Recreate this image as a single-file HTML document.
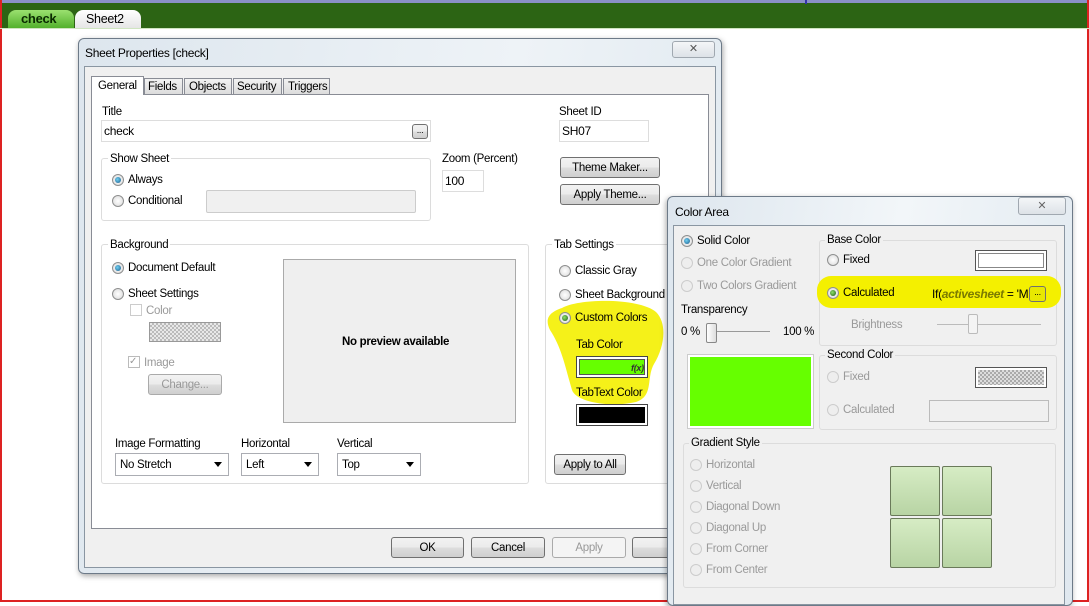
<!DOCTYPE html><html><head><style>
*{margin:0;padding:0;box-sizing:border-box}
body{width:1089px;height:602px;position:relative;overflow:hidden;background:#fff;font-family:"Liberation Sans",sans-serif;font-size:12px;color:#000}
.a{position:absolute}
.t{position:absolute;white-space:nowrap;font-size:11.5px;letter-spacing:-0.3px;margin-top:2px}
.g{color:#9a9a9a}
.grp{position:absolute;border:1px solid #dcdcdc;border-radius:3px}
.in{position:absolute;border:1px solid #abadb3;background:#fff}
.btn{position:absolute;border:1px solid #707070;border-radius:3px;background:linear-gradient(#f2f2f2,#ebebeb 50%,#dddddd 51%,#cfcfcf);text-align:center;font-size:11.5px;letter-spacing:-0.3px}
.r{position:absolute;width:12px;height:12px;border-radius:50%;border:1px solid #8e8f8f;background:radial-gradient(#fff,#d8d8d8)}
.r.on::after{content:"";position:absolute;left:2px;top:2px;width:6px;height:6px;border-radius:50%;background:radial-gradient(circle at 40% 40%,#6fd0f2,#1c5a8a)}
.r.ong::after{content:"";position:absolute;left:2px;top:2px;width:6px;height:6px;border-radius:50%;background:radial-gradient(circle at 40% 40%,#8ce16a,#1e5a10)}
.r.dis{border-color:#ccc;background:#eee}
.dd{position:absolute;border:1px solid #abadb3;background:#fff}
.dd::after{content:"";position:absolute;right:6px;top:8px;border:4px solid transparent;border-top:5px solid #000}
.sw{position:absolute;border-radius:2px;border:1px solid #6a7a5a;background:linear-gradient(#d6ecc4,#b8d4a4)}
</style></head><body>
<div class="a" style="left:0;top:0;width:1089px;height:3px;background:#8b90c8"></div>
<div class="a" style="left:0;top:3px;width:1089px;height:25px;background:#2c6414"></div>
<div class="a" style="left:0;top:0;width:2px;height:602px;background:#d22"></div>
<div class="a" style="left:1087px;top:0;width:2px;height:602px;background:#d22"></div>
<div class="a" style="left:0;top:600px;width:1089px;height:2px;background:#d22"></div>
<div class="a" style="left:805px;top:0;width:2px;height:4px;background:#33a"></div>
<div class="a" style="left:8px;top:10px;width:66px;height:19px;background:linear-gradient(#9be070,#4fae28);border-radius:8px 8px 0 0"></div>
<div class="t" style="left:21px;top:9px;font-weight:bold;font-size:13px;color:#0a2a00">check</div>
<div class="a" style="left:75px;top:10px;width:66px;height:19px;background:linear-gradient(#fff,#e4e4e4);border-radius:8px 8px 0 0"></div>
<div class="t" style="left:86px;top:10px;font-size:12.5px">Sheet2</div>
<div class="a" style="left:0;top:28px;width:1089px;height:1px;background:#cfe5c0"></div>

<div class="a" style="left:78px;top:38px;width:644px;height:536px;border:1px solid #6d7a88;border-radius:6px;background:linear-gradient(100deg,#dde6ee,#eef3f7 60%,#dfe8ef);box-shadow:1px 2px 6px rgba(0,0,0,.35)"></div>
<div class="t" style="left:85px;top:44px;font-size:12px">Sheet Properties [check]</div>
<div class="a" style="left:672px;top:41px;width:43px;height:17px;border:1px solid #a0a8b0;border-radius:3px;background:linear-gradient(#f4f6f8,#dde2e7);text-align:center;font-size:11px;color:#555;line-height:15px">✕</div>
<div class="a" style="left:84px;top:66px;width:632px;height:502px;border:1px solid #8a96a2;background:#f0f0f0"></div>
<div class="a" style="left:91px;top:94px;width:618px;height:435px;border:1px solid #898c95;background:#fff"></div>
<div class="a" style="left:91px;top:76px;width:53px;height:19px;border:1px solid #898c95;border-bottom:none;background:#fff"></div>
<div class="t" style="left:98px;top:78px">General</div>
<div class="a" style="left:144px;top:78px;width:39px;height:17px;border:1px solid #898c95;background:linear-gradient(#f2f2f2,#dcdcdc)"></div><div class="t" style="left:148px;top:79px">Fields</div>
<div class="a" style="left:184px;top:78px;width:48px;height:17px;border:1px solid #898c95;background:linear-gradient(#f2f2f2,#dcdcdc)"></div><div class="t" style="left:189px;top:79px">Objects</div>
<div class="a" style="left:233px;top:78px;width:49px;height:17px;border:1px solid #898c95;background:linear-gradient(#f2f2f2,#dcdcdc)"></div><div class="t" style="left:237px;top:79px">Security</div>
<div class="a" style="left:283px;top:78px;width:47px;height:17px;border:1px solid #898c95;background:linear-gradient(#f2f2f2,#dcdcdc)"></div><div class="t" style="left:288px;top:79px">Triggers</div>

<div class="t" style="left:102px;top:104px">Title</div>
<div class="in" style="left:101px;top:120px;width:330px;height:22px;border-color:#ddd"></div>
<div class="t" style="left:104px;top:122px;font-size:12px">check</div>
<div class="btn" style="left:412px;top:124px;width:16px;height:15px;font-size:9px;line-height:11px">...</div>
<div class="t" style="left:559px;top:104px">Sheet ID</div>
<div class="in" style="left:559px;top:120px;width:90px;height:22px;border-color:#ddd"></div>
<div class="t" style="left:562px;top:122px;font-size:12px">SH07</div>

<div class="grp" style="left:101px;top:158px;width:330px;height:63px"></div>
<div class="t" style="left:108px;top:151px;background:#fff;padding:0 2px">Show Sheet</div>
<div class="r on" style="left:112px;top:174px"></div><div class="t" style="left:128px;top:172px">Always</div>
<div class="r" style="left:112px;top:195px"></div><div class="t" style="left:128px;top:193px">Conditional</div>
<div class="a" style="left:206px;top:190px;width:210px;height:23px;border:1px solid #ccc;background:#f0f0f0;border-radius:2px"></div>
<div class="t" style="left:442px;top:151px">Zoom (Percent)</div>
<div class="in" style="left:442px;top:170px;width:42px;height:22px;border-color:#ddd"></div>
<div class="t" style="left:445px;top:172px;font-size:12px">100</div>
<div class="btn" style="left:560px;top:157px;width:100px;height:21px;line-height:21px">Theme Maker...</div>
<div class="btn" style="left:560px;top:184px;width:100px;height:21px;line-height:21px">Apply Theme...</div>

<div class="grp" style="left:101px;top:244px;width:428px;height:240px"></div>
<div class="t" style="left:108px;top:237px;background:#fff;padding:0 2px">Background</div>
<div class="r on" style="left:112px;top:262px"></div><div class="t" style="left:128px;top:260px">Document Default</div>
<div class="r" style="left:112px;top:288px"></div><div class="t" style="left:128px;top:286px">Sheet Settings</div>
<div class="a" style="left:130px;top:304px;width:12px;height:12px;border:1px solid #ccc"></div><div class="t g" style="left:146px;top:303px">Color</div>
<div class="a" style="left:149px;top:322px;width:72px;height:20px;border:1px solid #999;background:repeating-conic-gradient(#bbb 0 25%,#e8e8e8 0 50%) 0 0/4px 4px"></div>
<div class="a" style="left:128px;top:356px;width:12px;height:12px;border:1px solid #bbb;color:#999;font-size:10px;line-height:10px">✓</div><div class="t g" style="left:144px;top:355px">Image</div>
<div class="btn" style="left:148px;top:374px;width:74px;height:21px;line-height:21px;color:#999;border-color:#aaa">Change...</div>
<div class="a" style="left:283px;top:259px;width:233px;height:164px;border:1px solid #aaa;background:#efefef"></div>
<div class="t" style="left:342px;top:334px;font-weight:bold;font-size:11.5px">No preview available</div>
<div class="t" style="left:115px;top:436px">Image Formatting</div>
<div class="dd" style="left:115px;top:453px;width:114px;height:23px"></div><div class="t" style="left:120px;top:457px">No Stretch</div>
<div class="t" style="left:241px;top:436px">Horizontal</div>
<div class="dd" style="left:241px;top:453px;width:78px;height:23px"></div><div class="t" style="left:246px;top:457px">Left</div>
<div class="t" style="left:337px;top:436px">Vertical</div>
<div class="dd" style="left:337px;top:453px;width:84px;height:23px"></div><div class="t" style="left:342px;top:457px">Top</div>

<div class="grp" style="left:545px;top:244px;width:160px;height:240px"></div>
<div class="t" style="left:552px;top:237px;background:#fff;padding:0 2px">Tab Settings</div>
<svg class="a" style="left:540px;top:298px" width="130" height="112"><path d="M22 10 C40 0,100 0,116 14 C128 26,124 50,114 66 C106 80,114 98,96 104 C70 110,36 104,32 92 C26 72,22 50,10 32 C4 20,10 14,22 10Z" fill="#f4f000" opacity=".9"/></svg>
<div class="r" style="left:559px;top:265px"></div><div class="t" style="left:575px;top:263px">Classic Gray</div>
<div class="r" style="left:559px;top:289px"></div><div class="t" style="left:575px;top:287px">Sheet Background</div>
<div class="r ong" style="left:559px;top:312px"></div><div class="t" style="left:575px;top:310px">Custom Colors</div>
<div class="t" style="left:576px;top:337px">Tab Color</div>
<div class="a" style="left:576px;top:356px;width:72px;height:22px;border:1px solid #444;background:#fff;padding:2px"><div style="width:100%;height:100%;background:#66ff00;border:1px solid #555"></div></div>
<div class="t" style="left:631px;top:361px;font-size:9px;font-style:italic;font-weight:bold;color:#333">f(x)</div>
<div class="t" style="left:576px;top:385px">TabText Color</div>
<div class="a" style="left:576px;top:404px;width:72px;height:22px;border:1px solid #444;background:#fff;padding:2px"><div style="width:100%;height:100%;background:#000"></div></div>
<div class="btn" style="left:554px;top:454px;width:72px;height:21px;line-height:21px">Apply to All</div>

<div class="btn" style="left:391px;top:537px;width:73px;height:21px;line-height:21px">OK</div>
<div class="btn" style="left:471px;top:537px;width:74px;height:21px;line-height:21px">Cancel</div>
<div class="btn" style="left:552px;top:537px;width:74px;height:21px;line-height:21px;color:#999;border-color:#aaa;background:#f4f4f4">Apply</div>
<div class="btn" style="left:632px;top:537px;width:60px;height:21px;line-height:21px">&nbsp;&nbsp;&nbsp;&nbsp;&nbsp;&nbsp;&nbsp;&nbsp;&nbsp;&nbsp;&nbsp;&nbsp;&nbsp;&nbsp;H</div>

<div class="a" style="left:667px;top:196px;width:406px;height:410px;border:1px solid #6d7a88;border-radius:6px;background:linear-gradient(100deg,#dde6ee,#f2f6f9 50%,#dfe8ef);box-shadow:-1px 2px 6px rgba(0,0,0,.35)"></div>
<div class="t" style="left:675px;top:203px;font-size:12px">Color Area</div>
<div class="a" style="left:1018px;top:197px;width:48px;height:18px;border:1px solid #a0a8b0;border-radius:3px;background:linear-gradient(#f4f6f8,#dde2e7);text-align:center;font-size:11px;color:#666;line-height:16px">✕</div>
<div class="a" style="left:673px;top:225px;width:392px;height:380px;border:1px solid #8a96a2;background:#f0f0f0"></div>
<div class="r on" style="left:681px;top:235px"></div><div class="t" style="left:697px;top:233px">Solid Color</div>
<div class="r dis" style="left:681px;top:257px"></div><div class="t g" style="left:697px;top:255px">One Color Gradient</div>
<div class="r dis" style="left:681px;top:280px"></div><div class="t g" style="left:697px;top:278px">Two Colors Gradient</div>
<div class="t" style="left:681px;top:302px">Transparency</div>
<div class="t" style="left:681px;top:324px">0 %</div>
<div class="a" style="left:712px;top:331px;width:58px;height:1px;background:#999"></div>
<div class="a" style="left:706px;top:323px;width:11px;height:20px;border:1px solid #888;border-radius:2px;background:linear-gradient(90deg,#fff,#ddd)"></div>
<div class="t" style="left:783px;top:324px">100 %</div>
<div class="a" style="left:687px;top:354px;width:127px;height:75px;border:1px solid #ccc;padding:2px;background:#fff"><div style="width:100%;height:100%;background:#66ff00"></div></div>

<div class="grp" style="left:819px;top:240px;width:238px;height:106px"></div>
<div class="t" style="left:825px;top:232px;background:#f0f0f0;padding:0 2px">Base Color</div>
<div class="r" style="left:827px;top:254px"></div><div class="t" style="left:843px;top:252px">Fixed</div>
<div class="a" style="left:975px;top:250px;width:72px;height:21px;border:1px solid #555;background:#fff;padding:2px"><div style="width:100%;height:100%;border:1px solid #888"></div></div>
<div class="a" style="left:817px;top:276px;width:244px;height:32px;background:#f4f000;border-radius:14px"></div>
<div class="r ong" style="left:827px;top:287px"></div><div class="t" style="left:843px;top:285px">Calculated</div>
<div class="t" style="left:932px;top:285px;font-size:12px">If(<b><i style="color:#7a7a00">activesheet</i></b> = 'M</div>
<div class="btn" style="left:1029px;top:286px;width:17px;height:16px;font-size:9px;line-height:11px;background:#e8e800">...</div>
<div class="t g" style="left:851px;top:317px">Brightness</div>
<div class="a" style="left:937px;top:324px;width:104px;height:1px;background:#bbb"></div>
<div class="a" style="left:968px;top:314px;width:10px;height:20px;border:1px solid #bbb;border-radius:2px;background:#f4f4f4"></div>

<div class="grp" style="left:819px;top:355px;width:238px;height:75px"></div>
<div class="t" style="left:825px;top:347px;background:#f0f0f0;padding:0 2px">Second Color</div>
<div class="r dis" style="left:827px;top:371px"></div><div class="t g" style="left:843px;top:369px">Fixed</div>
<div class="a" style="left:975px;top:367px;width:72px;height:21px;border:1px solid #555;background:#fff;padding:2px"><div style="width:100%;height:100%;background:repeating-conic-gradient(#aaa 0 25%,#ddd 0 50%) 0 0/4px 4px"></div></div>
<div class="r dis" style="left:827px;top:404px"></div><div class="t g" style="left:843px;top:402px">Calculated</div>
<div class="a" style="left:929px;top:400px;width:120px;height:22px;border:1px solid #bbb;background:#f0f0f0"></div>

<div class="grp" style="left:683px;top:443px;width:373px;height:145px"></div>
<div class="t" style="left:689px;top:435px;background:#f0f0f0;padding:0 2px">Gradient Style</div>
<div class="r dis" style="left:690px;top:459px"></div><div class="t g" style="left:706px;top:457px">Horizontal</div>
<div class="r dis" style="left:690px;top:480px"></div><div class="t g" style="left:706px;top:478px">Vertical</div>
<div class="r dis" style="left:690px;top:501px"></div><div class="t g" style="left:706px;top:499px">Diagonal Down</div>
<div class="r dis" style="left:690px;top:522px"></div><div class="t g" style="left:706px;top:520px">Diagonal Up</div>
<div class="r dis" style="left:690px;top:543px"></div><div class="t g" style="left:706px;top:541px">From Corner</div>
<div class="r dis" style="left:690px;top:564px"></div><div class="t g" style="left:706px;top:562px">From Center</div>
<div class="sw" style="left:890px;top:466px;width:50px;height:50px"></div>
<div class="sw" style="left:942px;top:466px;width:50px;height:50px"></div>
<div class="sw" style="left:890px;top:518px;width:50px;height:50px"></div>
<div class="sw" style="left:942px;top:518px;width:50px;height:50px"></div>
</body></html>
